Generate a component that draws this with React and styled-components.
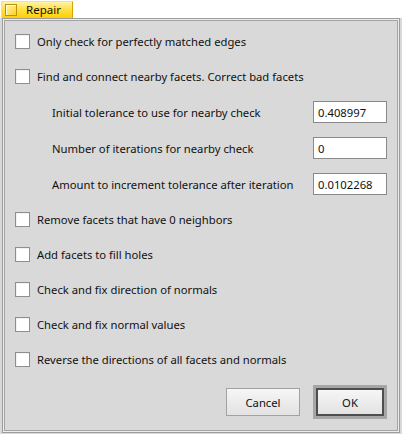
import React from "react";
import styled, { createGlobalStyle } from "styled-components";

const Global = createGlobalStyle`
  html, body { margin: 0; padding: 0; background: #ffffff; }
  #root { width: 402px; height: 434px; }
`;

const Window = styled.div`
  width: 402px;
  height: 434px;
  display: flex;
  flex-direction: column;
  background: #d9d9d9;
  font-family: "Noto Sans", "Open Sans", sans-serif;
  font-size: 11.25px;
  color: #111;
  overflow: hidden;
`;

const TabBar = styled.div`
  height: 18px;
  background: #ffffff;
  display: flex;
  align-items: flex-start;
  padding-left: 1px;
  box-sizing: border-box;
`;

const Tab = styled.div`
  margin-top: 1px;
  width: 72px;
  height: 17px;
  box-sizing: border-box;
  display: flex;
  align-items: center;
  gap: 9px;
  padding-left: 3px;
  background: linear-gradient(#fff3a8 0%, #ffe04a 45%, #ffd000 100%);
  border-top: 1px solid #f6e27a;
  border-left: 1px solid #f6e27a;
  border-right: 1px solid #d2a800;
`;

const TabIcon = styled.span`
  width: 12px;
  height: 12px;
  box-sizing: border-box;
  border: 1px solid #b8940a;
  background: linear-gradient(135deg, #fff6b8, #ffd21a);
  box-shadow: inset 1px 1px 0 #fffbe0;
`;

const TabLabel = styled.span`
  font-size: 11.5px;
  color: #1a1200;
  line-height: 1;
`;

const Panel = styled.div`
  flex: 1;
  margin: 0 2px 1px 2px;
  border: 1px solid #9c9c9c;
  box-shadow: inset 0 0 0 1px #ececec, inset 0 0 0 2px #a4a4a4;
  display: flex;
  flex-direction: column;
  padding: 5px 0 0 12px;
`;

const CheckRow = styled.label`
  height: 35px;
  display: flex;
  align-items: center;
  gap: 7px;
`;

const Box = styled.span`
  width: 15px;
  height: 15px;
  box-sizing: border-box;
  border: 1px solid #8e8e8e;
  background: #ffffff;
  box-shadow: inset 1px 1px 0 #f2f2f2;
  flex: none;
`;

const FieldRow = styled.div`
  height: 36px;
  display: flex;
  align-items: center;
  justify-content: space-between;
  padding: 0 12px 0 37px;
`;

const Input = styled.div`
  width: 74px;
  height: 22px;
  box-sizing: border-box;
  border: 1px solid #8a8a8a;
  background: #ffffff;
  display: flex;
  align-items: center;
  padding-left: 4px;
  font-size: 11.25px;
  color: #111;
`;

const ButtonBar = styled.div`
  margin-top: 8px;
  display: flex;
  justify-content: flex-end;
  align-items: center;
  gap: 13px;
  padding-right: 12px;
`;

const Button = styled.button`
  width: ${(p) => p.$w}px;
  height: 28px;
  box-sizing: border-box;
  border: 1px solid ${(p) => (p.$default ? "#4e4e4e" : "#a2a2a2")};
  ${(p) => (p.$default ? "border-width: 2px;" : "")}
  background: linear-gradient(#f6f6f6, #e2e2e2);
  font-family: "Noto Sans", "Open Sans", sans-serif;
  font-size: 11.25px;
  color: #111;
  padding: 0;
  margin: 0;
`;

const DefaultFrame = styled.div`
  width: 74px;
  height: 34px;
  box-sizing: border-box;
  border: 3px solid #a6a6a6;
  display: flex;
  align-items: center;
  justify-content: center;
`;

const checks1 = [
  "Only check for perfectly matched edges",
  "Find and connect nearby facets. Correct bad facets",
];

const fields = [
  ["Initial tolerance to use for nearby check", "0.408997"],
  ["Number of iterations for nearby check", "0"],
  ["Amount to increment tolerance after iteration", "0.0102268"],
];

const checks2 = [
  "Remove facets that have 0 neighbors",
  "Add facets to fill holes",
  "Check and fix direction of normals",
  "Check and fix normal values",
  "Reverse the directions of all facets and normals",
];

export default function App() {
  return (
    <>
      <Global />
      <Window>
        <TabBar>
          <Tab>
            <TabIcon />
            <TabLabel>Repair</TabLabel>
          </Tab>
        </TabBar>
        <Panel>
          {checks1.map((t) => (
            <CheckRow key={t}>
              <Box />
              <span>{t}</span>
            </CheckRow>
          ))}
          {fields.map(([l, v]) => (
            <FieldRow key={l}>
              <span>{l}</span>
              <Input>{v}</Input>
            </FieldRow>
          ))}
          {checks2.map((t) => (
            <CheckRow key={t}>
              <Box />
              <span>{t}</span>
            </CheckRow>
          ))}
          <ButtonBar>
            <Button $w={74}>Cancel</Button>
            <DefaultFrame>
              <Button $w={68} $default>OK</Button>
            </DefaultFrame>
          </ButtonBar>
        </Panel>
      </Window>
    </>
  );
}
